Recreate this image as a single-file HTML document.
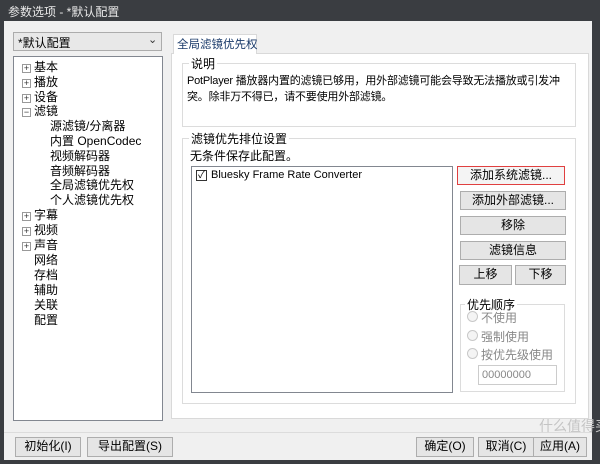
<!DOCTYPE html>
<html><head><meta charset="utf-8"><style>
*{margin:0;padding:0;box-sizing:border-box}
body{width:600px;height:464px;background:#3a3d41;font-family:"Liberation Sans","Noto Sans CJK SC",sans-serif;font-size:12px;color:#000;position:relative;overflow:hidden}
.a{position:absolute;white-space:nowrap}
.title{left:8px;top:3px;color:#e8e8e8;font-size:12px}
.client{left:4px;top:21px;width:588px;height:439px;background:#f0f0f0}
.btn{position:absolute;border:1px solid #adadad;background:#e5e5e5;text-align:center;line-height:17px;font-size:12px;white-space:nowrap}
.grp{position:absolute;border:1px solid #dcdcdc}
.gl{position:absolute;background:#f0f0f0;padding:0 2px;top:-9px;left:6px;white-space:nowrap}
.tree div{position:absolute;white-space:nowrap}
.radio{position:absolute;width:11px;height:11px;border:1px solid #c8c8c8;border-radius:50%;background:#f4f4f4}
.pm{position:absolute;width:9px;height:9px;border:1px solid #999;background:#fff;font-size:9px;line-height:7px;text-align:center;color:#333}
</style></head><body>
<div class="a title">参数选项 - *默认配置</div>
<div class="a client"></div>
<div class="a" style="left:13px;top:32px;width:149px;height:19px;border:1px solid #acacac;background:#e8e8e8;padding:1px 4px">*默认配置</div>
<div class="a" style="left:148px;top:33px;font-size:11px;color:#333">&#8964;</div>
<div class="a tree" style="left:13px;top:56px;width:150px;height:365px;border:1px solid #828790;background:#fff">
<div class="pm" style="left:8px;top:7px">+</div><div style="left:20px;top:1px">基本</div>
<div class="pm" style="left:8px;top:22px">+</div><div style="left:20px;top:16px">播放</div>
<div class="pm" style="left:8px;top:37px">+</div><div style="left:20px;top:31px">设备</div>
<div class="pm" style="left:8px;top:51px">−</div><div style="left:20px;top:45px">滤镜</div>
<div style="left:36px;top:60px">源滤镜/分离器</div>
<div style="left:36px;top:75px">内置 OpenCodec</div>
<div style="left:36px;top:90px">视频解码器</div>
<div style="left:36px;top:105px">音频解码器</div>
<div style="left:36px;top:119px">全局滤镜优先权</div>
<div style="left:36px;top:134px">个人滤镜优先权</div>
<div class="pm" style="left:8px;top:155px">+</div><div style="left:20px;top:149px">字幕</div>
<div class="pm" style="left:8px;top:170px">+</div><div style="left:20px;top:164px">视频</div>
<div class="pm" style="left:8px;top:185px">+</div><div style="left:20px;top:179px">声音</div>
<div style="left:20px;top:194px">网络</div>
<div style="left:20px;top:209px">存档</div>
<div style="left:20px;top:224px">辅助</div>
<div style="left:20px;top:239px">关联</div>
<div style="left:20px;top:254px">配置</div>
</div>
<div class="a" style="left:171px;top:53px;width:418px;height:366px;border:1px solid #d9d9d9;background:#fff"></div>
<div class="a" style="left:173px;top:34px;width:84px;height:20px;border:1px solid #d9d9d9;border-bottom:none;background:#fff;padding:1px 3px;color:#1a3a6a;font-size:11.5px">全局滤镜优先权</div>
<div class="grp" style="left:182px;top:63px;width:394px;height:64px"><div class="gl" style="background:#fff">说明</div>
<div class="a" style="left:4px;top:9px;line-height:16px;font-size:11px;letter-spacing:-0.2px">PotPlayer 播放器内置的滤镜已够用，用外部滤镜可能会导致无法播放或引发冲<br>突。除非万不得已，请不要使用外部滤镜。</div></div>
<div class="grp" style="left:182px;top:138px;width:394px;height:266px"><div class="gl" style="background:#fff">滤镜优先排位设置</div>
<div class="a" style="left:7px;top:8px">无条件保存此配置。</div></div>
<div class="a" style="left:191px;top:166px;width:262px;height:227px;border:1px solid #828790;background:#fff"></div>
<div class="a" style="left:196px;top:170px;width:11px;height:11px;border:1px solid #333;font-size:10px;line-height:9px;text-align:center">✓</div>
<div class="a" style="left:211px;top:169px;font-size:11px">Bluesky Frame Rate Converter</div>
<div class="btn" style="left:457px;top:166px;width:108px;height:19px;border-color:#e04040;background:#f4f4f4">添加系统滤镜...</div>
<div class="btn" style="left:460px;top:191px;width:106px;height:19px">添加外部滤镜...</div>
<div class="btn" style="left:460px;top:216px;width:106px;height:19px">移除</div>
<div class="btn" style="left:460px;top:241px;width:106px;height:19px">滤镜信息</div>
<div class="btn" style="left:459px;top:265px;width:53px;height:20px">上移</div>
<div class="btn" style="left:515px;top:265px;width:51px;height:20px">下移</div>
<div class="grp" style="left:460px;top:304px;width:105px;height:88px"><div class="gl" style="background:#fff;left:4px">优先顺序</div></div>
<div class="radio" style="left:467px;top:311px"></div><div class="a" style="left:481px;top:309px;color:#888">不使用</div>
<div class="radio" style="left:467px;top:330px"></div><div class="a" style="left:481px;top:328px;color:#888">强制使用</div>
<div class="radio" style="left:467px;top:348px"></div><div class="a" style="left:481px;top:346px;color:#888">按优先级使用</div>
<div class="a" style="left:478px;top:365px;width:79px;height:20px;border:1px solid #ccc;background:#fff;color:#888;font-size:11px;padding:3px 3px">00000000</div>
<div class="a" style="left:4px;top:432px;width:588px;border-top:1px solid #dcdcdc"></div>
<div class="btn" style="left:15px;top:437px;width:66px;height:20px">初始化(I)</div>
<div class="btn" style="left:87px;top:437px;width:86px;height:20px">导出配置(S)</div>
<div class="btn" style="left:416px;top:437px;width:58px;height:20px">确定(O)</div>
<div class="btn" style="left:478px;top:437px;width:56px;height:20px">取消(C)</div>
<div class="btn" style="left:533px;top:437px;width:54px;height:20px">应用(A)</div>
<div class="a" style="left:539px;top:416px;color:#c4c4c4;font-size:14px">什么值得买</div>
</body></html>
